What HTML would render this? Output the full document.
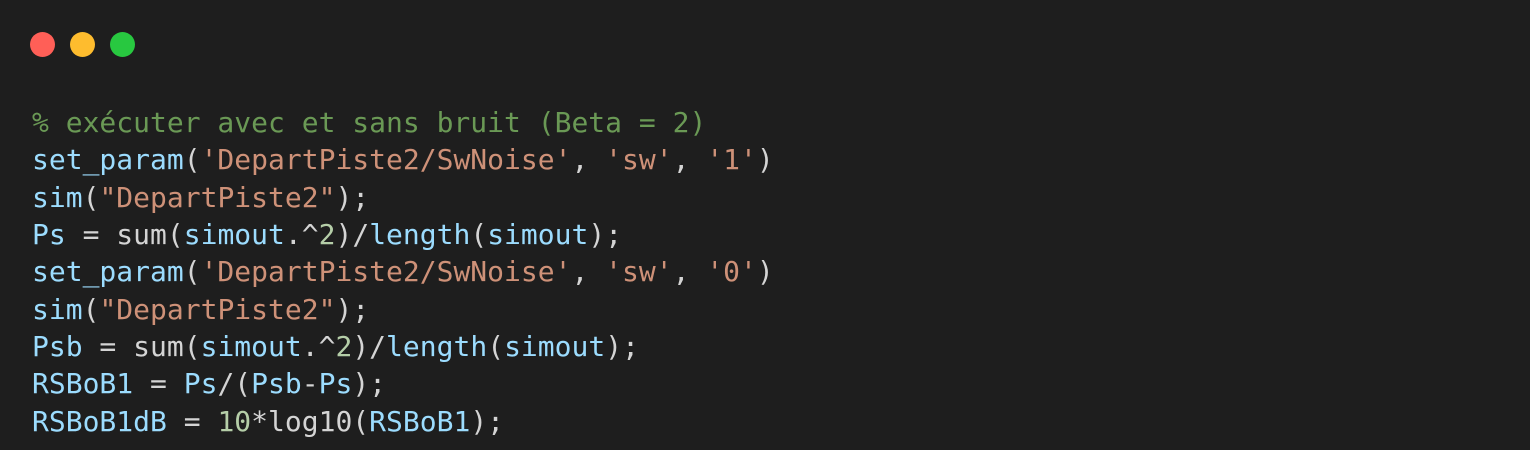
<!DOCTYPE html>
<html><head><meta charset="utf-8"><style>
html,body{margin:0;padding:0;background:#1e1e1e;width:1530px;height:450px;overflow:hidden}
.d{position:absolute;top:32px;width:25px;height:25px;border-radius:50%}
pre{position:absolute;left:32px;top:104px;margin:0;font-family:"DejaVu Sans Mono","Liberation Mono",monospace;font-size:28px;line-height:37.33px;color:#d4d4d4}
.c{color:#6a9955}.v{color:#9cdcfe}.s{color:#ce9178}.n{color:#b5cea8}
</style></head><body>
<div class="d" style="left:30px;background:#ff5f57"></div>
<div class="d" style="left:70px;background:#febc2e"></div>
<div class="d" style="left:110px;background:#28c840"></div>
<pre><span class="c">% exécuter avec et sans bruit (Beta = 2)</span>
<span class="v">set_param</span>(<span class="s">'DepartPiste2/SwNoise'</span>, <span class="s">'sw'</span>, <span class="s">'1'</span>)
<span class="v">sim</span>(<span class="s">"DepartPiste2"</span>);
<span class="v">Ps</span> = sum(<span class="v">simout</span>.^<span class="n">2</span>)/<span class="v">length</span>(<span class="v">simout</span>);
<span class="v">set_param</span>(<span class="s">'DepartPiste2/SwNoise'</span>, <span class="s">'sw'</span>, <span class="s">'0'</span>)
<span class="v">sim</span>(<span class="s">"DepartPiste2"</span>);
<span class="v">Psb</span> = sum(<span class="v">simout</span>.^<span class="n">2</span>)/<span class="v">length</span>(<span class="v">simout</span>);
<span class="v">RSBoB1</span> = <span class="v">Ps</span>/(<span class="v">Psb</span>-<span class="v">Ps</span>);
<span class="v">RSBoB1dB</span> = <span class="n">10</span>*log10(<span class="v">RSBoB1</span>);</pre>
</body></html>
